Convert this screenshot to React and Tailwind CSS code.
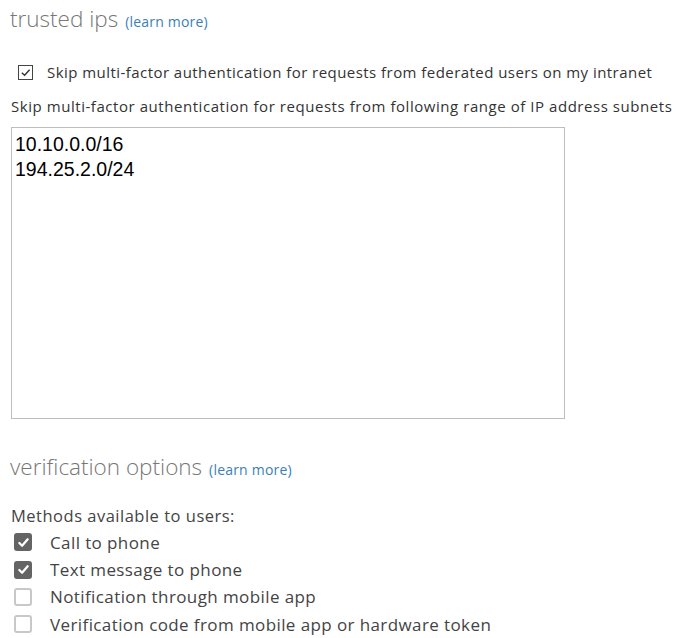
import { useState } from 'react'

const font = { fontFamily: '"Open Sans", "Noto Sans", sans-serif' }

const LearnMore = () => (
    <a className="ml-[7px] text-[14px] text-[#3b7fb6] tracking-[0.2px]" href="#">(learn more)</a>
)

const MethodRow = ({ label, checked, onToggle }) => (
    <label className="flex items-center h-[27.3px] cursor-pointer" onClick={onToggle}>
        {checked ? (
            <span className="w-[18px] h-[18px] rounded-[3px] bg-[#646464] flex items-center justify-center ml-[4px]">
                <svg width="13" height="13" viewBox="0 0 14 14">
                    <path d="M2.5 7.5 L5.5 10.5 L11.5 3.5" fill="none" stroke="white" strokeWidth="2.4" strokeLinecap="round" strokeLinejoin="round" />
                </svg>
            </span>
        ) : (
            <span className="w-[18px] h-[18px] rounded-[3px] border-2 border-[#c8c8c8] bg-white ml-[4px]"></span>
        )}
        <span className="ml-[18px] text-[17px] tracking-[0.4px] text-[#444] whitespace-nowrap">{label}</span>
    </label>
)

const App = () => {

    const [skipFederated, setSkipFederated] = useState(true)
    const [subnets, setSubnets] = useState("10.10.0.0/16\n194.25.2.0/24")
    const [methods, setMethods] = useState({
        call: true,
        text: true,
        app: false,
        code: false
    })

    const toggle = (key) => {
        setMethods((prev) => ({ ...prev, [key]: !prev[key] }))
    }

    return (
        <div className='w-[682px] h-[638px] bg-white pl-[10px] pt-[8px] overflow-hidden' style={font}>

            <div className='flex items-baseline h-[30px]'>
                <h2 className='text-[22.5px] font-light text-[#777] leading-none'>trusted ips</h2>
                <LearnMore />
            </div>

            <label className='flex items-center mt-[23px] ml-[8px] cursor-pointer'>
                <span className='w-[15px] h-[15px] border-[1.5px] border-[#444] flex items-center justify-center'
                    onClick={() => setSkipFederated(!skipFederated)}>
                    {skipFederated && (
                        <svg width="11" height="11" viewBox="0 0 12 12">
                            <path d="M2 6.2 L5 9 L10.5 3" fill="none" stroke="#333" strokeWidth="1.5" />
                        </svg>
                    )}
                </span>
                <span className='ml-[14px] text-[15px] tracking-[0.45px] text-[#333] whitespace-nowrap'>Skip multi-factor authentication for requests from federated users on my intranet</span>
            </label>

            <p className='mt-[11px] ml-[1px] text-[15px] tracking-[0.55px] text-[#333] whitespace-nowrap'>Skip multi-factor authentication for requests from following range of IP address subnets</p>

            <textarea
                className='block mt-[10px] ml-[1px] w-[554px] h-[292px] border border-[#bdbdbd] px-[3px] pt-[4px] pb-0 text-[19.5px] leading-[25px] text-black outline-none resize-none'
                style={{ fontFamily: '"Liberation Sans", Arial, sans-serif' }}
                value={subnets}
                onChange={(e) => setSubnets(e.target.value)}
            ></textarea>

            <div className='flex items-baseline mt-[37px]'>
                <h2 className='text-[22.5px] font-light text-[#777] leading-none'>verification options</h2>
                <LearnMore />
            </div>

            <p className='mt-[24px] ml-[1px] text-[16.5px] tracking-[0.5px] text-[#444]'>Methods available to users:</p>

            <div className='flex flex-col'>
                <MethodRow label="Call to phone" checked={methods.call} onToggle={() => toggle("call")} />
                <MethodRow label="Text message to phone" checked={methods.text} onToggle={() => toggle("text")} />
                <MethodRow label="Notification through mobile app" checked={methods.app} onToggle={() => toggle("app")} />
                <MethodRow label="Verification code from mobile app or hardware token" checked={methods.code} onToggle={() => toggle("code")} />
            </div>
        </div>
    )
}

export default App
